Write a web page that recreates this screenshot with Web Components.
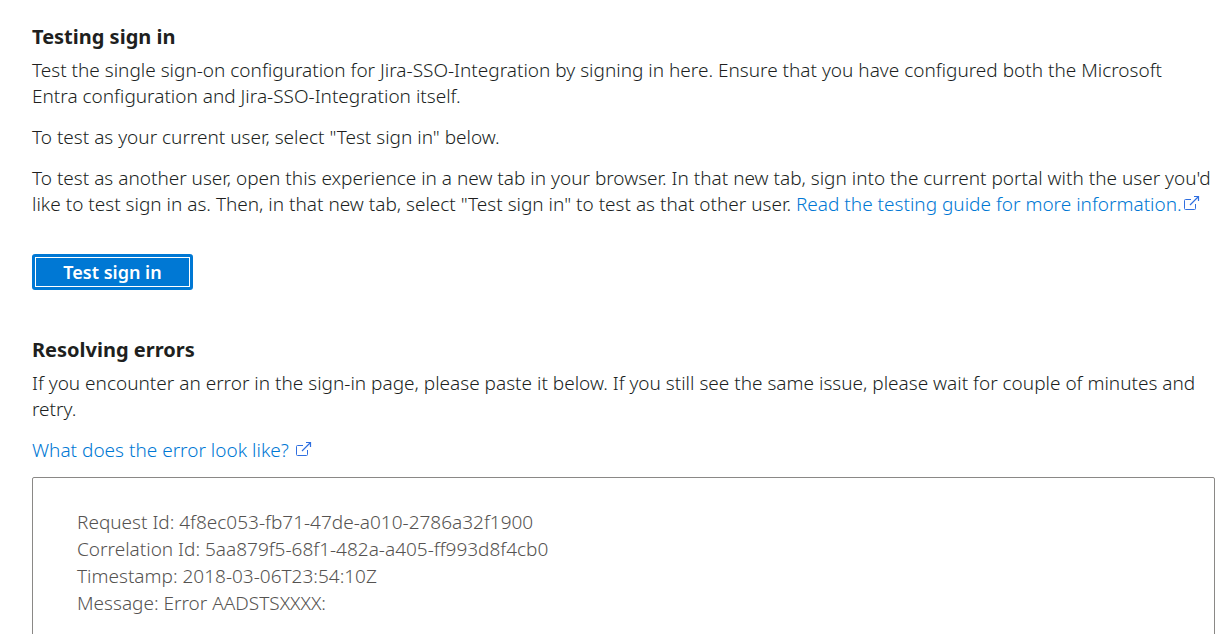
<!DOCTYPE html>
<html lang="en">
<head>
<meta charset="utf-8">
<meta name="viewport" content="width=device-width, initial-scale=1">
<title>Test single sign-on</title>
<style>
  body {
    margin: 0;
    background: #fff;
    color: #201f1e;
    font: 300 19px/26px "Segoe UI", "Noto Sans", "Open Sans", sans-serif;
  }
</style>
</head>
<body>
<sso-test-panel app="Jira-SSO-Integration"></sso-test-panel>

<script>
class SsoSection extends HTMLElement {
  connectedCallback() {
    this.attachShadow({ mode: "open" });
    this.shadowRoot.innerHTML = `
      <style>
        :host { display: block; }
        h2 {
          margin: 0 0 7px;
          font-size: 20px;
          line-height: 26px;
          font-weight: 700;
        }
        .body {
          display: flex;
          flex-direction: column;
          align-items: flex-start;
          gap: 15px;
        }
      </style>
      <section>
        <h2>${this.getAttribute("heading")}</h2>
        <div class="body"><slot></slot></div>
      </section>
    `;
  }
}

class ExternalLink extends HTMLElement {
  connectedCallback() {
    this.attachShadow({ mode: "open" });
    this.shadowRoot.innerHTML = `
      <style>
        :host { display: inline; }
        a { color: #0078d4; text-decoration: none; }
        a:hover { text-decoration: underline; }
        svg { width: 16px; height: 16px; margin-left: var(--icon-gap, 2px); }
      </style>
      <a href="${this.getAttribute("href")}"><slot></slot><svg viewBox="0 0 16 16" fill="none" stroke="#2f6fe0" aria-hidden="true">
        <path d="M7 4.5H1.5Q.5 4.5 .5 5.5V13.5Q.5 14.5 1.5 14.5H10.5Q11.5 14.5 11.5 13.5V9"/>
        <path d="M10 1.5H14.5V6M14.5 1.5L6 10" stroke-width="1.2"/>
      </svg></a>
    `;
  }
}

class PrimaryButton extends HTMLElement {
  connectedCallback() {
    this.attachShadow({ mode: "open" });
    this.shadowRoot.innerHTML = `
      <style>
        :host { display: inline-block; }
        button {
          display: block;
          min-width: 161px;
          height: 36px;
          padding: 0 16px;
          border: 3px solid #0078d4;
          border-radius: 3px;
          background: #0078d4;
          box-shadow: inset 0 0 0 1px #fff;
          color: #fff;
          font: inherit;
          font-size: 18px;
          font-weight: 600;
          line-height: 28px;
        }
      </style>
      <button type="button"><slot></slot></button>
    `;
  }
}

class ErrorInput extends HTMLElement {
  connectedCallback() {
    this.attachShadow({ mode: "open" });
    this.shadowRoot.innerHTML = `
      <style>
        :host { display: block; width: 100%; }
        textarea {
          display: block;
          box-sizing: border-box;
          width: 100%;
          height: 240px;
          padding: 31px 44px;
          border: 1px solid #8a8886;
          border-radius: 2px;
          background: #fff;
          color: #555351;
          font: inherit;
          line-height: 27px;
          resize: none;
        }
      </style>
      <textarea aria-label="Error details"></textarea>
    `;
    this.shadowRoot.querySelector("textarea").value = this.textContent.trim();
  }
}

class SsoTestPanel extends HTMLElement {
  connectedCallback() {
    const app = this.getAttribute("app");
    this.attachShadow({ mode: "open" });
    this.shadowRoot.innerHTML = `
      <style>
        :host {
          display: block;
          height: 100vh;
          box-sizing: border-box;
          padding: 24px 12px 0 32px;
          overflow: hidden;
        }
        main { display: flex; flex-direction: column; gap: 47px; }
        p { margin: 0; }
        primary-button { margin-top: 22px; }
        .example { --icon-gap: 7px; margin-bottom: -1px; }
      </style>
      <main>
        <sso-section heading="Testing sign in">
          <p>Test the single sign-on configuration for ${app} by signing in here. Ensure that you have configured both the Microsoft<br>Entra configuration and ${app} itself.</p>
          <p>To test as your current user, select "Test sign in" below.</p>
          <p>To test as another user, open this experience in a new tab in your browser. In that new tab, sign into the current portal with the user you'd like to test sign in as. Then, in that new tab, select "Test sign in" to test as that other user. <external-link href="#guide">Read the testing guide for more information.</external-link></p>
          <primary-button>Test sign in</primary-button>
        </sso-section>
        <sso-section heading="Resolving errors">
          <p>If you encounter an error in the sign-in page, please paste it below. If you still see the same issue, please wait for couple of minutes and retry.</p>
          <external-link class="example" href="#example">What does the error look like?</external-link>
          <error-input>Request Id: 4f8ec053-fb71-47de-a010-2786a32f1900
Correlation Id: 5aa879f5-68f1-482a-a405-ff993d8f4cb0
Timestamp: 2018-03-06T23:54:10Z
Message: Error AADSTSXXXX:</error-input>
        </sso-section>
      </main>
    `;
  }
}

customElements.define("sso-section", SsoSection);
customElements.define("external-link", ExternalLink);
customElements.define("primary-button", PrimaryButton);
customElements.define("error-input", ErrorInput);
customElements.define("sso-test-panel", SsoTestPanel);
</script>
</body>
</html>
